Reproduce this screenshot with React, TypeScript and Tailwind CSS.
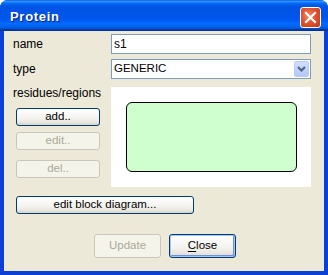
const font = { fontFamily: '"Liberation Sans", Arial, sans-serif' };

function XpButton({
  label,
  className,
  disabled,
  isDefault,
  children,
}: {
  label?: string;
  className: string;
  disabled?: boolean;
  isDefault?: boolean;
  children?: React.ReactNode;
}) {
  const base = disabled
    ? "border-[#c9c7ba] bg-[#f5f4ea] text-[#aca899]"
    : "border-[#003c74] bg-[linear-gradient(180deg,#ffffff_0%,#f3f2ee_60%,#e6e3d9_88%,#d6d0c5_100%)] text-black";
  const focus = isDefault
    ? "shadow-[inset_0_0_0_1px_#a9c4f5,inset_-1px_-1px_0_1px_#6d8fdc]"
    : "";
  return (
    <button
      type="button"
      disabled={disabled}
      className={`flex items-center justify-center rounded-[3px] border text-[11.5px] leading-none ${base} ${focus} ${className}`}
    >
      {children ?? label}
    </button>
  );
}

export default function App() {
  return (
    <div className="h-[275px] w-[328px] bg-white" style={font}>
      <div className="flex h-full w-full flex-col overflow-hidden rounded-t-[8px] bg-[#0a3fd8]">
        {/* title bar */}
        <div className="flex h-[31px] shrink-0 items-center justify-between bg-[linear-gradient(180deg,#0058ee_0%,#3593ff_4%,#288eff_6%,#127dff_8%,#036ffc_10%,#0262ee_14%,#0057e5_20%,#0054e3_24%,#0055eb_56%,#005bf5_66%,#026afe_76%,#0062ef_86%,#0052d6_92%,#0040ab_94%,#003092_100%)] pl-[10px] pr-[7px] pt-[3px]">
          <span className="text-[13px] font-bold tracking-[0.7px] text-white [text-shadow:1px_1px_0_#0a1e80]">
            Protein
          </span>
          <div className="flex h-[21px] w-[21px] items-center justify-center rounded-[3px] border border-white bg-[radial-gradient(circle_at_40%_40%,#ef8a6b_0%,#e0532f_45%,#c13a18_100%)]">
            <svg width="13" height="13" viewBox="0 0 13 13">
              <path d="M2 2 L11 11 M11 2 L2 11" stroke="white" strokeWidth="2.2" strokeLinecap="square" />
            </svg>
          </div>
        </div>

        {/* content */}
        <div className="mx-[4px] mb-[4px] flex flex-1 flex-col bg-[#ece9d8] pl-[9px] pt-[3px] text-[12px] text-black">
          <div className="flex h-[20px] items-center">
            <span className="w-[98px]">name</span>
            <div className="flex h-[20px] w-[200px] items-center border border-[#7f9db9] bg-white pl-[2px]">
              s1
            </div>
          </div>

          <div className="mt-[5px] flex h-[20px] items-center">
            <span className="w-[98px]">type</span>
            <div className="flex h-[20px] w-[200px] items-center justify-between border border-[#7f9db9] bg-white pl-[2px] pr-[1px]">
              <span className="text-[11.5px]">GENERIC</span>
              <div className="flex h-[16px] w-[15px] items-center justify-center rounded-[2px] border border-[#b8cbf5] bg-[linear-gradient(180deg,#d3e0fd_0%,#c1d3fb_50%,#b3c8f7_100%)]">
                <svg width="9" height="6" viewBox="0 0 9 6">
                  <path d="M1 1 L4.5 4.5 L8 1" fill="none" stroke="#4d6185" strokeWidth="2" />
                </svg>
              </div>
            </div>
          </div>

          <div className="mt-[8px] flex">
            <div className="flex w-[98px] flex-col">
              <span className="h-[13px] leading-[13px]">residues/regions</span>
              <XpButton label="add.." className="ml-[3px] mt-[8px] h-[18px] w-[84px]" />
              <XpButton label="edit.." disabled className="ml-[3px] mt-[6px] h-[18px] w-[84px]" />
              <XpButton label="del.." disabled className="ml-[3px] mt-[10px] h-[18px] w-[84px]" />
            </div>
            <div className="h-[100px] w-[200px] bg-white pl-[15px] pt-[15px]">
              <div className="h-[70px] w-[171px] rounded-[6px] border-[1.5px] border-black bg-[#cfffcf]" />
            </div>
          </div>

          <XpButton label="edit block diagram..." className="ml-[3px] mt-[9px] h-[18px] w-[178px]" />

          <div className="ml-[81px] mt-[20px] flex gap-[8px]">
            <XpButton label="Update" disabled className="h-[24px] w-[67px]" />
            <XpButton isDefault className="h-[24px] w-[67px]">
              <span>
                <span className="underline underline-offset-2">C</span>lose
              </span>
            </XpButton>
          </div>
        </div>
      </div>
    </div>
  );
}
